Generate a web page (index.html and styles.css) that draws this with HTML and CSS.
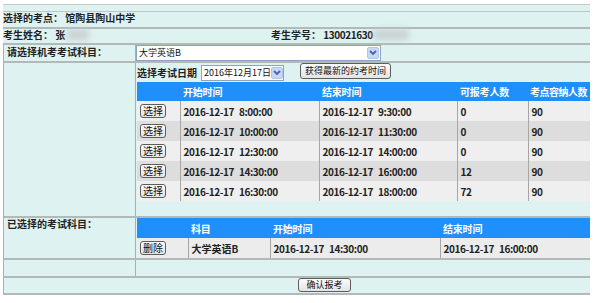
FILE: index.html
```html
<!DOCTYPE html>
<html lang="zh-CN">
<head>
<meta charset="utf-8">
<title>机考报考</title>
<link rel="stylesheet" href="styles.css">
</head>
<body>
<div class="form">
  <div class="row row-blank"></div>
  <div class="row row-site"><span class="lbl">选择的考点： 馆陶县陶山中学</span></div>
  <div class="row row-student">
    <div class="pair pair-name"><span class="lbl">考生姓名： 张</span><span class="blur blur-name"></span></div>
    <div class="pair pair-id"><span class="lbl">考生学号： <span class="num">130021630</span></span><span class="blur blur-id"></span></div>
  </div>
  <div class="row split row-subject">
    <div class="side lbl">请选择机考考试科目：</div>
    <div class="main">
      <div class="select select-subject">
        <span class="select-text">大学英语B</span>
        <span class="select-arrow"><svg width="10" height="8" viewBox="0 0 10 8"><path d="M2 2 L5 5 L8 2" fill="none" stroke="#4a64a8" stroke-width="1.8"/></svg></span>
      </div>
    </div>
  </div>
  <div class="row split row-times">
    <div class="side"></div>
    <div class="main main-times">
      <div class="toolbar">
        <span class="lbl toolbar-label">选择考试日期</span>
        <div class="select select-date">
          <span class="select-text">2016年12月17日</span>
          <span class="select-arrow"><svg width="10" height="8" viewBox="0 0 10 8"><path d="M2 2 L5 5 L8 2" fill="none" stroke="#4a64a8" stroke-width="1.8"/></svg></span>
        </div>
        <button class="btn btn-refresh">获得最新的约考时间</button>
      </div>
      <table class="grid grid-times">
        <colgroup><col class="c-btn"><col class="c-start"><col class="c-end"><col class="c-avail"><col class="c-cap"></colgroup>
        <thead>
          <tr><th></th><th>开始时间</th><th>结束时间</th><th>可报考人数</th><th class="th-cap">考点容纳人数</th></tr>
        </thead>
        <tbody>
          <tr><td><button class="btn btn-small">选择</button></td><td>2016-12-17 8:00:00</td><td>2016-12-17 9:30:00</td><td>0</td><td>90</td></tr>
          <tr><td><button class="btn btn-small">选择</button></td><td>2016-12-17 10:00:00</td><td>2016-12-17 11:30:00</td><td>0</td><td>90</td></tr>
          <tr><td><button class="btn btn-small">选择</button></td><td>2016-12-17 12:30:00</td><td>2016-12-17 14:00:00</td><td>0</td><td>90</td></tr>
          <tr><td><button class="btn btn-small">选择</button></td><td>2016-12-17 14:30:00</td><td>2016-12-17 16:00:00</td><td>12</td><td>90</td></tr>
          <tr><td><button class="btn btn-small">选择</button></td><td>2016-12-17 16:30:00</td><td>2016-12-17 18:00:00</td><td>72</td><td>90</td></tr>
        </tbody>
      </table>
    </div>
  </div>
  <div class="row split row-chosen">
    <div class="side lbl side-chosen">已选择的考试科目：</div>
    <div class="main">
      <table class="grid grid-chosen">
        <colgroup><col class="k-btn"><col class="k-subject"><col class="k-start"><col class="k-end"></colgroup>
        <thead>
          <tr><th></th><th>科目</th><th>开始时间</th><th>结束时间</th></tr>
        </thead>
        <tbody>
          <tr><td><button class="btn btn-small">删除</button></td><td class="td-text">大学英语B</td><td>2016-12-17 14:30:00</td><td>2016-12-17 16:00:00</td></tr>
        </tbody>
      </table>
    </div>
  </div>
  <div class="row split row-gap">
    <div class="side"></div>
    <div class="main"></div>
  </div>
  <div class="row row-submit">
    <button class="btn btn-submit">确认报考</button>
  </div>
</div>
</body>
</html>
```

FILE: styles.css
```css
* {
  box-sizing: border-box;
  margin: 0;
  padding: 0;
}

html,
body {
  background: #ffffff;
}

body {
  margin: 4px 6px 0 3px;
  font-family: "Noto Sans CJK SC", "Noto Sans", sans-serif;
  font-size: 10px;
  color: #222222;
}

.form {
  width: 587px;
  background: #def2f2;
  border-top: 1px solid #c4caca;
}

.lbl {
  font-weight: bold;
}

.num {
  letter-spacing: -0.4px;
}

.row {
  border-bottom: 2px solid #b2b9b9;
}

.row-blank {
  height: 7px;
  border-bottom-width: 1px;
  border-bottom-color: #bfc6c6;
}

.row-site {
  height: 17px;
  line-height: 10px;
  padding-top: 1px;
}

.row-student {
  height: 16px;
  display: flex;
  line-height: 10px;
  padding-top: 1px;
}

.pair {
  display: flex;
  align-items: flex-start;
}

.pair-name {
  width: 268px;
}

.blur {
  display: inline-block;
  height: 11px;
  margin-top: -1px;
  background: #c4c8c8;
  filter: blur(3px);
  opacity: 0.75;
}

.blur-name {
  width: 22px;
  margin-left: 2px;
}

.blur-id {
  width: 36px;
}

.split {
  display: flex;
  border-left: 1px solid #a9aeae;
}

.side {
  width: 132px;
  flex: none;
  border-right: 1px solid #a9aeae;
}

.main {
  flex: 1;
  min-width: 0;
}

.row-subject {
  height: 18px;
}

.row-subject .side {
  padding: 1px 3px 0;
  line-height: 12px;
}

.select {
  display: flex;
  align-items: center;
  justify-content: space-between;
  height: 16px;
  background: #ffffff;
  border: 1px solid #8ea3bf;
  font-size: 9px;
  color: #111111;
}

.select-text {
  padding-left: 2px;
  line-height: 14px;
  white-space: nowrap;
}

.select-arrow {
  display: flex;
  align-items: center;
  justify-content: center;
  width: 12px;
  height: 12px;
  margin-right: 1px;
  background: #c9d7f6;
  border: 1px solid #b2c4ee;
  border-radius: 2px;
}

.select-subject {
  width: 245px;
}

.main-times {
  padding: 0 0 15px 1px;
}

.toolbar {
  display: flex;
  align-items: center;
  height: 19px;
}

.toolbar-label {
  width: 60px;
  line-height: 12px;
}

.select-date {
  width: 83px;
  margin-left: 4px;
}

.btn {
  font-family: "Noto Sans CJK SC", "Noto Sans", sans-serif;
  font-size: 9px;
  color: #111111;
  background: linear-gradient(#fbfbfb, #e4e4e4);
  border: 1px solid #5c5c5c;
  border-radius: 3px;
  line-height: 12px;
  cursor: pointer;
}

.btn-refresh {
  width: 91px;
  height: 16px;
  margin-left: 16px;
  align-self: flex-start;
}

.btn-small {
  width: 26px;
  height: 14px;
  font-size: 10px;
  display: block;
}

.btn-submit {
  width: 53px;
  height: 14px;
}

.grid {
  border-collapse: collapse;
  table-layout: fixed;
  font-weight: bold;
}

.grid th {
  background: #1f8ffb;
  color: #ffffff;
  text-align: left;
  padding: 0 0 0 3px;
  white-space: nowrap;
  font-weight: bold;
  letter-spacing: -0.2px;
}

.grid th.th-cap {
  padding-left: 2px;
  letter-spacing: -0.5px;
}

.grid td {
  padding: 0 0 0 3px;
  letter-spacing: -0.4px;
  word-spacing: 3px;
  white-space: nowrap;
  border-left: 1px solid #a6a6a6;
}

.grid td.td-text {
  letter-spacing: 0;
  word-spacing: 0;
}

.grid td:first-child {
  border-left: none;
}

.grid-times {
  width: 453px;
}

.grid-times th {
  height: 19px;
}

.grid-times td {
  height: 20px;
}

.grid-times tbody tr:nth-child(odd) {
  background: #efefef;
}

.grid-times tbody tr:nth-child(even) {
  background: #dddddd;
}

.c-btn { width: 43px; }
.c-start { width: 139px; }
.c-end { width: 138px; }
.c-avail { width: 71px; }
.c-cap { width: 62px; }

.row-chosen .main {
  padding-left: 1px;
}

.side-chosen {
  padding: 1px 3px 0;
  line-height: 9px;
}

.grid-chosen {
  width: 453px;
}

.grid-chosen th {
  height: 20px;
}

.grid-chosen td {
  height: 20px;
  background: #ececec;
}

.k-btn { width: 51px; }
.k-subject { width: 82px; }
.k-start { width: 170px; }
.k-end { width: 150px; }

.row-gap {
  height: 18px;
}

.row-submit {
  height: 17px;
  display: flex;
  align-items: flex-start;
  padding-left: 294px;
  border-left: 1px solid #a9aeae;
}
```
